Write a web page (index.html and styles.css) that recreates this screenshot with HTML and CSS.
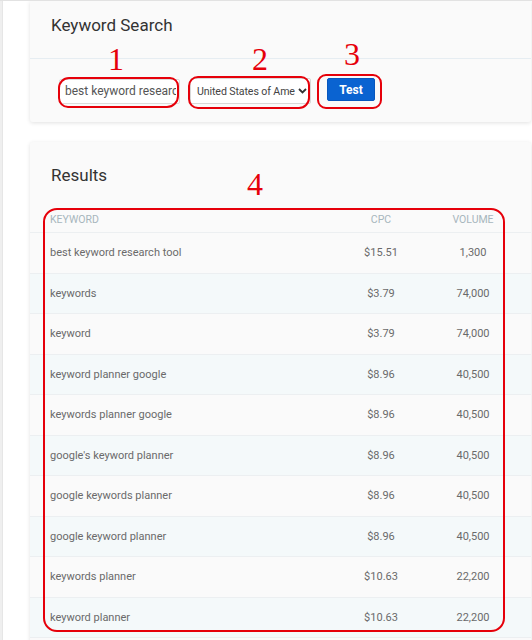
FILE: index.html
```html
<!DOCTYPE html>
<html lang="en">
<head>
<meta charset="utf-8">
<title>Keyword Search</title>
<link rel="stylesheet" href="styles.css">
</head>
<body>
<div class="page">
  <aside class="rail"></aside>
  <main class="main">
    <section class="card search">
      <header class="card-head"><h2 class="card-title">Keyword Search</h2></header>
      <div class="controls">
        <input class="kw" type="text" value="best keyword research tool">
        <div class="select">
          <span class="select-text">United States of Ame</span>
          <svg class="chev" width="9" height="6" viewBox="0 0 9 6"><path d="M1 1l3.5 3.5L8 1" fill="none" stroke="#333" stroke-width="1.8"/></svg>
        </div>
        <button class="btn" type="button">Test</button>
      </div>
    </section>

    <section class="card results">
      <h2 class="card-title results-title">Results</h2>
      <div class="table">
        <div class="row head"><div class="c-kw">Keyword</div><div class="c-num">CPC</div><div class="c-num">Volume</div><div></div></div>
        <div class="row"><div class="c-kw">best keyword research tool</div><div class="c-num">$15.51</div><div class="c-num">1,300</div><div></div></div>
        <div class="row"><div class="c-kw">keywords</div><div class="c-num">$3.79</div><div class="c-num">74,000</div><div></div></div>
        <div class="row"><div class="c-kw">keyword</div><div class="c-num">$3.79</div><div class="c-num">74,000</div><div></div></div>
        <div class="row"><div class="c-kw">keyword planner google</div><div class="c-num">$8.96</div><div class="c-num">40,500</div><div></div></div>
        <div class="row"><div class="c-kw">keywords planner google</div><div class="c-num">$8.96</div><div class="c-num">40,500</div><div></div></div>
        <div class="row"><div class="c-kw">google's keyword planner</div><div class="c-num">$8.96</div><div class="c-num">40,500</div><div></div></div>
        <div class="row"><div class="c-kw">google keywords planner</div><div class="c-num">$8.96</div><div class="c-num">40,500</div><div></div></div>
        <div class="row"><div class="c-kw">google keyword planner</div><div class="c-num">$8.96</div><div class="c-num">40,500</div><div></div></div>
        <div class="row"><div class="c-kw">keywords planner</div><div class="c-num">$10.63</div><div class="c-num">22,200</div><div></div></div>
        <div class="row"><div class="c-kw">keyword planner</div><div class="c-num">$10.63</div><div class="c-num">22,200</div><div></div></div>
      </div>
    </section>
  </main>

  <div class="annot a1"></div>
  <div class="annot a2"></div>
  <div class="annot a3"></div>
  <div class="annot a4"></div>
  <span class="num n1">1</span>
  <span class="num n2">2</span>
  <span class="num n3">3</span>
  <span class="num n4">4</span>
</div>
</body>
</html>
```

FILE: styles.css
```css
html, body {
  margin: 0;
  padding: 0;
  background: #ffffff;
  overflow: hidden;
}
body {
  border-top: 1px solid #e2e2e2;
  font-family: Roboto, "Liberation Sans", Arial, sans-serif;
  color: #333;
}
.page {
  position: relative;
  display: flex;
  height: 639px;
}
.rail {
  width: 2px;
  flex: none;
  background: #efefef;
  border-right: 1px solid #e6e6e6;
}
.main {
  flex: none;
  padding-left: 27px;
  display: flex;
  flex-direction: column;
  gap: 20px;
}
.card {
  width: 501px;
  background: #fafafa;
  border-radius: 0 0 3px 3px;
  box-shadow: 0 1px 4px rgba(0, 0, 0, 0.12);
}
.results {
  border-radius: 3px;
  padding-bottom: 40px;
}
.card-title {
  margin: 0;
  font-size: 17px;
  font-weight: 400;
  line-height: 22px;
  color: #333;
}
.card-head {
  padding: 13px 21px 22px;
  border-bottom: 1px solid #e6edf2;
}
.controls {
  display: flex;
  align-items: center;
  height: 26px;
  padding: 19px 0 18px 29px;
}
.kw {
  box-sizing: border-box;
  width: 121px;
  height: 25px;
  margin: 0;
  padding: 0 3px 0 5px;
  border: 1px solid #dcdcdc;
  border-radius: 2px;
  background: #fff;
  font-family: Roboto, "Liberation Sans", Arial, sans-serif;
  font-size: 12px;
  color: #555;
  outline: none;
}
.select {
  box-sizing: border-box;
  margin-left: 10px;
  width: 121px;
  height: 26px;
  display: flex;
  align-items: center;
  padding: 0 3px 0 6px;
  border: 1px solid #d8d8d8;
  border-radius: 2px;
  background: #fff;
}
.select-text {
  flex: 1;
  white-space: nowrap;
  font-size: 10.6px;
  letter-spacing: -0.1px;
  color: #444;
}
.chev {
  flex: none;
  margin-left: 1px;
}
.btn {
  margin-left: 16px;
  width: 48px;
  height: 23px;
  padding: 0;
  border: 1px solid #0857be;
  border-radius: 2px;
  background: #0a63d1;
  color: #fff;
  font-family: Roboto, "Liberation Sans", Arial, sans-serif;
  font-size: 12px;
  font-weight: 700;
  margin-top: -3px;
}
.results-title {
  padding: 22px 21px 0;
  margin-bottom: 21px;
}
.row {
  display: grid;
  grid-template-columns: 311px 80px 104px 1fr;
  align-items: center;
  box-sizing: border-box;
  height: 40.5px;
  border-bottom: 1px solid #eceff1;
  font-size: 11px;
  color: #6a6a6a;
}
.row:nth-child(odd) {
  background: #f4f9fa;
}
.row.head {
  height: 26px;
  background: transparent;
  text-transform: uppercase;
  color: #a7b6bd;
  font-size: 10.5px;
}
.c-kw {
  padding-left: 20px;
  white-space: nowrap;
}
.c-num {
  text-align: center;
}

/* annotation overlay */
.annot {
  position: absolute;
  box-sizing: border-box;
  border: 2px solid #e6000a;
  pointer-events: none;
}
.a1 { left: 58px; top: 76px; width: 121px; height: 31px; border-radius: 11px 9px 12px 10px; }
.a2 { left: 188px; top: 75px; width: 122px; height: 33px; border-radius: 10px 9px 11px 10px; }
.a3 { left: 317px; top: 73px; width: 65px; height: 35px; border-radius: 9px; }
.a4 { left: 43px; top: 207px; width: 462px; height: 424px; border-radius: 14px; }
.num {
  position: absolute;
  width: 20px;
  text-align: center;
  font-family: "Liberation Serif", "Times New Roman", serif;
  font-size: 32px;
  line-height: 32px;
  color: #e6000a;
}
.n1 { left: 106px; top: 42px; }
.n2 { left: 250px; top: 42px; }
.n3 { left: 342px; top: 37px; }
.n4 { left: 245px; top: 167px; }
```
